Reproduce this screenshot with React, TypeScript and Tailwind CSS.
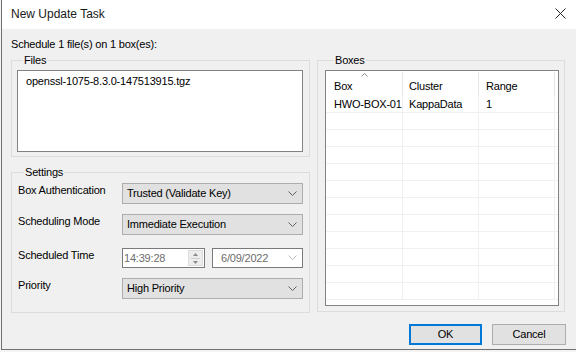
import React from 'react'

const font = { fontFamily: '"Liberation Sans", Arial, sans-serif' }

function Chevron({ light }: { light?: boolean }) {
  return (
    <svg width="9" height="6" viewBox="0 0 9 6" className="shrink-0">
      <path d="M0.5 0.5 L4.5 4.5 L8.5 0.5" fill="none" stroke={light ? '#bcbcbc' : '#606060'} strokeWidth="1" />
    </svg>
  )
}

function Combo({ value }: { value: string }) {
  return (
    <div className="w-[181px] h-[21px] flex items-center justify-between bg-[#e1e1e1] border border-[#adadad] pl-[4px] pr-[5px] text-[11px] text-black">
      <span>{value}</span>
      <Chevron />
    </div>
  )
}

function Row({ label, children }: { label: string; children: React.ReactNode }) {
  return (
    <div className="flex items-start h-[21px]">
      <div className="w-[104px] pt-[1px] text-[11px] leading-[13px]">{label}</div>
      {children}
    </div>
  )
}

const rows = Array.from({ length: 12 })

export default function App() {
  return (
    <div className="w-[576px] h-[352px] bg-[#f4f4f4] pl-[1px] overflow-hidden text-black tracking-[-0.2px] whitespace-nowrap" style={font}>
      <div className="w-[575px] h-[350px] border-l border-b border-[#6f6f6f] bg-[#f0f0f0] flex flex-col">
        {/* Title bar */}
        <div className="h-[29px] bg-white flex items-center justify-between pl-[9px] pr-[10px] shrink-0">
          <span className="text-[12px] leading-[14px] text-[#1a1a1a] -mt-[2px] tracking-normal">New Update Task</span>
          <svg width="11" height="11" viewBox="0 0 11 11" className="-mt-[3px]">
            <path d="M0.5 0.5 L10.5 10.5 M10.5 0.5 L0.5 10.5" stroke="#222" strokeWidth="1" />
          </svg>
        </div>

        {/* Body */}
        <div className="flex-1 pl-[9px] pt-[9px]">
          <div className="text-[11px] leading-[13px] h-[16px]">Schedule 1 file(s) on 1 box(es):</div>

          <div className="flex gap-[7px]">
            {/* Left column */}
            <div className="flex flex-col w-[299px]">
              <fieldset className="border border-[#dcdcdc] h-[103px] pl-[5px] pr-[6px] pb-[5px] m-0">
                <legend className="ml-[6px] px-[1px] text-[11px] leading-[13px]">Files</legend>
                <div className="mt-[3px] h-[82px] bg-white border border-[#828282] pl-[8px] pt-[4px] text-[11px] leading-[13px]">
                  openssl-1075-8.3.0-147513915.tgz
                </div>
              </fieldset>

              <fieldset className="mt-[9px] border border-[#dcdcdc] h-[147px] pl-[6px] pr-[6px] m-0">
                <legend className="ml-[6px] px-[1px] text-[11px] leading-[13px]">Settings</legend>
                <div className="flex flex-col mt-[4px] gap-[10px]">
                  <Row label="Box Authentication">
                    <Combo value="Trusted (Validate Key)" />
                  </Row>
                  <Row label="Scheduling Mode">
                    <Combo value="Immediate Execution" />
                  </Row>
                  <div className="flex items-start h-[20px] mt-[3px]">
                    <div className="w-[104px] pt-[1px] text-[11px] leading-[13px]">Scheduled Time</div>
                    <div className="w-[83px] h-[20px] flex items-center justify-between bg-white border border-[#7a7a7a] pl-[1px] pr-[1px] text-[11px] text-[#6d6d6d]">
                      <span>14:39:28</span>
                      <div className="w-[15px] h-[16px] bg-[#ededed] border border-[#dcdcdc] flex flex-col items-center justify-center gap-[2px]">
                        <svg width="5" height="3" viewBox="0 0 5 3"><path d="M0 3 L2.5 0 L5 3 Z" fill="#8a8a8a" /></svg>
                        <div className="w-[9px] h-[1px] bg-[#cfcfcf]" />
                        <svg width="5" height="3" viewBox="0 0 5 3"><path d="M0 0 L2.5 3 L5 0 Z" fill="#8a8a8a" /></svg>
                      </div>
                    </div>
                    <div className="ml-[7px] w-[91px] h-[20px] flex items-center justify-between bg-white border border-[#7a7a7a] pl-[8px] pr-[5px] text-[11px] text-[#6d6d6d]">
                      <span>6/09/2022</span>
                      <Chevron light />
                    </div>
                  </div>
                  <Row label="Priority">
                    <Combo value="High Priority" />
                  </Row>
                </div>
              </fieldset>
            </div>

            {/* Boxes */}
            <fieldset className="border border-[#dcdcdc] w-[248px] h-[258px] pl-[7px] pr-[5px] m-0">
              <legend className="ml-[9px] px-[1px] text-[11px] leading-[13px]">Boxes</legend>
              <div className="mt-[3px] h-[236px] bg-white border border-[#828282] overflow-hidden text-[11px]">
                <div className="relative flex h-[25px] pt-[1px]">
                  <div className="w-[77px] border-r border-[#e5e5e5] pl-[8px] pt-[6px]">Box</div>
                  <div className="w-[76px] border-r border-[#e5e5e5] pl-[6px] pt-[6px]">Cluster</div>
                  <div className="w-[76px] border-r border-[#e5e5e5] pl-[7px] pt-[6px]">Range</div>
                  <svg width="7" height="4" viewBox="0 0 7 4" className="absolute left-[35px] top-[2px]">
                    <path d="M0.5 3.5 L3.5 0.5 L6.5 3.5" fill="none" stroke="#8a8a8a" strokeWidth="1" />
                  </svg>
                </div>
                {rows.map((_, i) => (
                  <div key={i} className="flex h-[17px] border-b border-[#f0f0f0]">
                    <div className="w-[77px] border-r border-[#f0f0f0] pl-[8px] pt-[2px] leading-[13px]">{i === 0 ? 'HWO-BOX-01' : ''}</div>
                    <div className="w-[76px] border-r border-[#f0f0f0] pl-[6px] pt-[2px] leading-[13px]">{i === 0 ? 'KappaData' : ''}</div>
                    <div className="w-[76px] border-r border-[#f0f0f0] pl-[7px] pt-[2px] leading-[13px]">{i === 0 ? '1' : ''}</div>
                  </div>
                ))}
              </div>
            </fieldset>
          </div>

          {/* Buttons */}
          <div className="flex justify-end gap-[10px] pr-[10px] mt-[11px]">
            <button className="w-[73px] h-[21px] bg-[#e1e1e1] border-2 border-[#0078d7] text-[11px]">OK</button>
            <button className="w-[74px] h-[21px] bg-[#e1e1e1] border border-[#adadad] text-[11px]">Cancel</button>
          </div>
        </div>
      </div>
    </div>
  )
}
